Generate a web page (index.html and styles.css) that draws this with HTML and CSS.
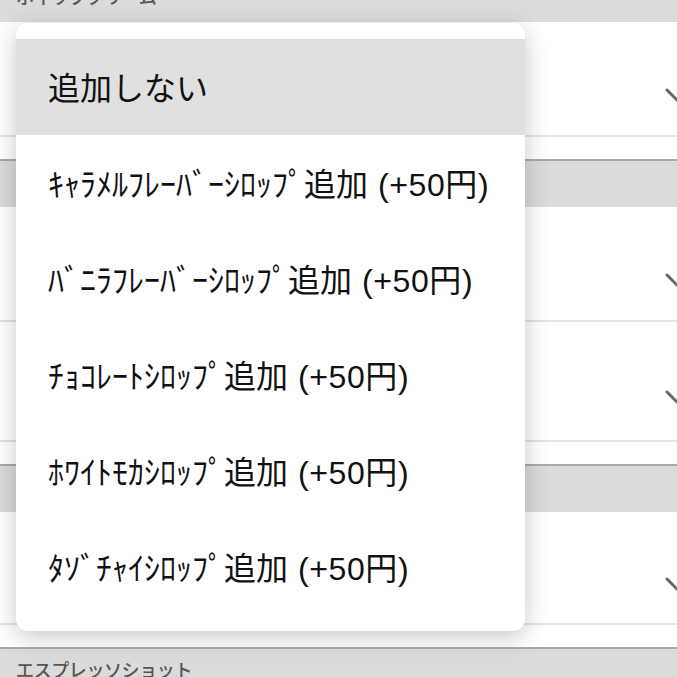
FILE: index.html
```html
<!DOCTYPE html>
<html lang="ja">
<head>
<meta charset="utf-8">
<link rel="stylesheet" href="styles.css">
</head>
<body>
<div class="page">
  <section class="section">
    <div class="section-header">ホイップクリーム</div>
    <div class="row row-a"><svg class="chev" viewBox="0 0 28 16" width="28" height="16"><polyline points="2,2 14,14 26,2"/></svg></div>
    <div class="spacer"></div>
  </section>
  <section class="section">
    <div class="section-header">シロップ</div>
    <div class="row row-a"><svg class="chev" viewBox="0 0 28 16" width="28" height="16"><polyline points="2,2 14,14 26,2"/></svg></div>
    <div class="row row-b"><svg class="chev" viewBox="0 0 28 16" width="28" height="16"><polyline points="2,2 14,14 26,2"/></svg></div>
    <div class="spacer"></div>
  </section>
  <section class="section">
    <div class="section-header">ソース</div>
    <div class="row row-c"><svg class="chev" viewBox="0 0 28 16" width="28" height="16"><polyline points="2,2 14,14 26,2"/></svg></div>
    <div class="spacer"></div>
  </section>
  <section class="section">
    <div class="section-header">エスプレッソショット</div>
  </section>
</div>

<ul class="menu">
  <li class="menu-item selected">追加しない</li>
  <li class="menu-item">ｷｬﾗﾒﾙﾌﾚｰﾊﾞｰｼﾛｯﾌﾟ追加 <span class="price">(+50円)</span></li>
  <li class="menu-item">ﾊﾞﾆﾗﾌﾚｰﾊﾞｰｼﾛｯﾌﾟ追加 <span class="price">(+50円)</span></li>
  <li class="menu-item">ﾁｮｺﾚｰﾄｼﾛｯﾌﾟ追加 <span class="price">(+50円)</span></li>
  <li class="menu-item">ﾎﾜｲﾄﾓｶｼﾛｯﾌﾟ追加 <span class="price">(+50円)</span></li>
  <li class="menu-item">ﾀｿﾞﾁｬｲｼﾛｯﾌﾟ追加 <span class="price">(+50円)</span></li>
</ul>
</body>
</html>
```

FILE: styles.css
```css
html, body {
  margin: 0;
  padding: 0;
  background: #ffffff;
  overflow: hidden;
  height: 677px;
}

body {
  font-family: "Liberation Sans", "Noto Sans CJK JP", sans-serif;
  position: relative;
}

.page {
  margin-top: -26px;
}

.section-header {
  box-sizing: border-box;
  height: 48px;
  border-top: 2px solid #a9a9a9;
  background: #dcdbda;
  color: #555555;
  font-family: "Noto Sans CJK JP", sans-serif;
  font-size: 18px;
  font-weight: 500;
  letter-spacing: -0.4px;
  line-height: 40px;
  padding-left: 16px;
}

.row {
  box-sizing: border-box;
  border-bottom: 2px solid #e3e3e3;
  display: flex;
  justify-content: flex-end;
  align-items: flex-start;
  background: #ffffff;
}

.row-a { height: 115px; padding-top: 66px; }
.row-b { height: 120px; padding-top: 68px; }
.row-c { height: 113px; padding-top: 65px; }

.chev {
  margin-right: -16px;
  fill: none;
  stroke: #666666;
  stroke-width: 3;
  stroke-linecap: round;
  stroke-linejoin: round;
}

.spacer {
  height: 22px;
}

.menu {
  position: absolute;
  left: 16px;
  top: 23px;
  width: 509px;
  margin: 0;
  padding: 16px 0;
  list-style: none;
  background: #ffffff;
  border-radius: 12px;
  box-shadow: 0 6px 24px rgba(0, 0, 0, 0.22);
}

.menu-item {
  height: 96px;
  display: flex;
  align-items: center;
  gap: 10px;
  padding-left: 32px;
  padding-bottom: 2px;
  box-sizing: border-box;
  font-size: 32px;
  color: #111111;
  white-space: nowrap;
}

.price {
  letter-spacing: 0.6px;
}

.menu-item.selected {
  background: #e0e0e0;
}
```
